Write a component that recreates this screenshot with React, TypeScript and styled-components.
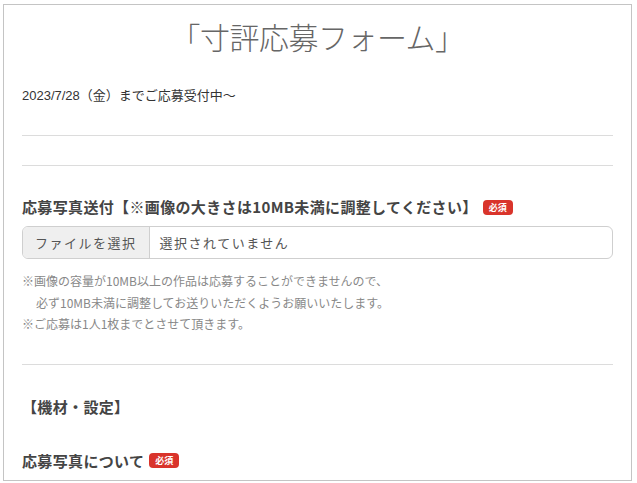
import React from "react";
import styled, { createGlobalStyle } from "styled-components";

const GlobalStyle = createGlobalStyle`
  body {
    margin: 0;
    background: #fff;
    font-family: "Noto Sans CJK JP", "Noto Sans", sans-serif;
    color: #333;
  }
`;

function App() {
  return (
    <>
      <GlobalStyle />
      <Frame>
        <Title>「寸評応募フォーム」</Title>
        <Lead>2023/7/28（金）までご応募受付中～</Lead>
        <HLine $top={30} />
        <HLine $top={29} />
        <Label $top={30}>
          応募写真送付【※画像の大きさは10MB未満に調整してください】
          <Required>必須</Required>
        </Label>
        <FileBox>
          <FileButton>ファイルを選択</FileButton>
          <FileName>選択されていません</FileName>
        </FileBox>
        <Notes>
          <p>※画像の容量が10MB以上の作品は応募することができませんので、</p>
          <p className="indent">必ず10MB未満に調整してお送りいただくようお願いいたします。</p>
          <p>※ご応募は1人1枚までとさせて頂きます。</p>
        </Notes>
        <HLine $top={29} />
        <Label $top={31}>【機材・設定】</Label>
        <Label $top={32}>
          応募写真について
          <Required>必須</Required>
        </Label>
      </Frame>
    </>
  );
}

const Frame = styled.div`
  box-sizing: border-box;
  margin: 4px 5px 0 3px;
  height: 477px;
  border: 1px solid #c4c4c4;
  padding: 0 18px;
  overflow: hidden;
  display: flex;
  flex-direction: column;
`;

const Title = styled.h1`
  margin: 12px 0 0;
  text-align: center;
  font-size: 30px;
  font-weight: 200;
  line-height: 38px;
  color: #666;
  letter-spacing: -0.5px;
`;

const Lead = styled.div`
  margin-top: 32px;
  font-family: "Liberation Sans", "Noto Sans CJK JP", sans-serif;
  font-size: 13px;
  line-height: 18px;
  color: #333;
`;

const HLine = styled.div<{ $top: number }>`
  margin-top: ${(p) => p.$top}px;
  height: 1px;
  background: #dcdcdc;
`;

const Label = styled.div<{ $top: number }>`
  margin-top: ${(p) => p.$top}px;
  display: flex;
  align-items: center;
  font-size: 15px;
  font-weight: 700;
  line-height: 22px;
  letter-spacing: 0.35px;
  color: #444;
`;

const Required = styled.span`
  margin-left: 5px;
  display: inline-flex;
  align-items: center;
  justify-content: center;
  width: 30px;
  height: 15px;
  border-radius: 4px;
  background: #d9342b;
  color: #fff;
  font-size: 9px;
  line-height: 1;
  letter-spacing: 0;
  font-weight: 700;
`;

const FileBox = styled.div`
  margin-top: 8px;
  display: flex;
  height: 31px;
  border: 1px solid #cfcfcf;
  border-radius: 6px;
  overflow: hidden;
  font-size: 13px;
  letter-spacing: 1.5px;
  color: #555;
`;

const FileButton = styled.div`
  display: flex;
  align-items: center;
  padding: 0 12px;
  background: #efefef;
  border-right: 1px solid #cfcfcf;
`;

const FileName = styled.div`
  display: flex;
  align-items: center;
  padding-left: 10px;
  background: #fff;
`;

const Notes = styled.div`
  margin-top: 11px;
  font-size: 12px;
  line-height: 21.5px;
  color: #888;

  p {
    margin: 0;
  }

  .indent {
    padding-left: 14px;
  }
`;

export default App;
